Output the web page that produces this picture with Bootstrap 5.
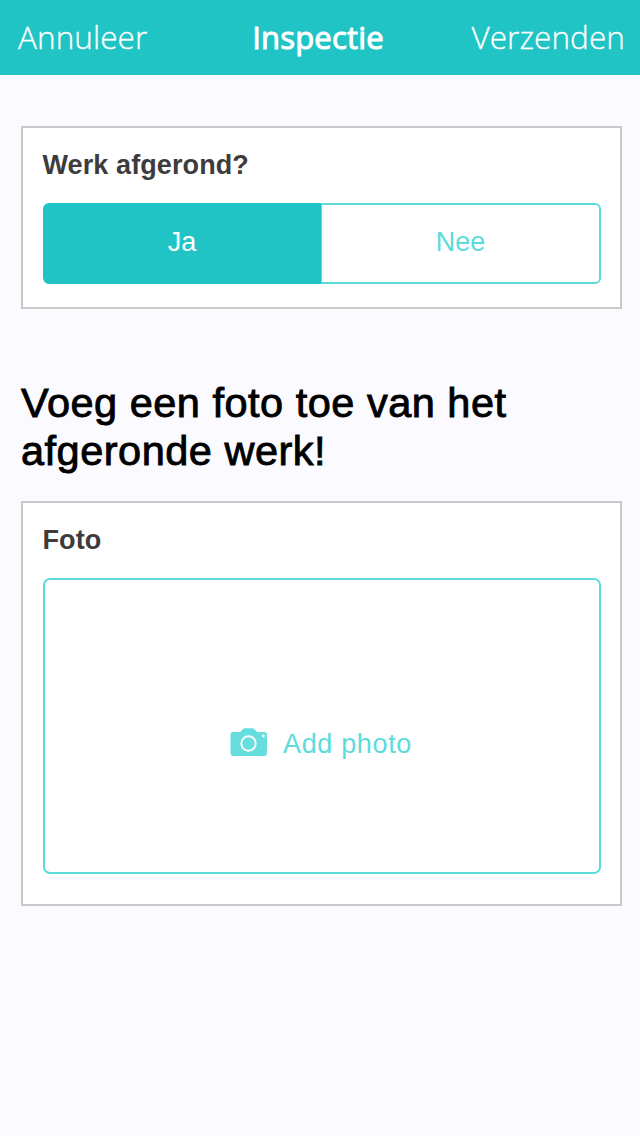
<!DOCTYPE html>
<html lang="nl">
<head>
<meta charset="utf-8">
<meta name="viewport" content="width=device-width, initial-scale=1">
<title>Inspectie</title>
<link href="https://cdn.jsdelivr.net/npm/bootstrap@5.3.0/dist/css/bootstrap.min.css" rel="stylesheet">
<style>
body{background:#fbfaff;font-family:"Liberation Sans",Arial,sans-serif;font-size:27px;min-height:1136px}
.topbar{height:75px;background:#20c4c4;font-family:"Open Sans",sans-serif;font-size:31.5px;line-height:73px;padding:0 15px 0 18px}
.topbar a{font-weight:300;flex:1 1 0;letter-spacing:.08px;-webkit-text-stroke:.3px #fff}
.topbar h1{font-size:31px;font-weight:400;line-height:75px;letter-spacing:.2px;padding-right:7px;-webkit-text-stroke:1px #fff}
.page-body{padding:51px 18px 0 21px}
.panel{border:2px solid #c9c9c9;border-radius:0;padding:18px 19px 0 20px}
.panel-title{font-size:27px;font-weight:700;line-height:38px;color:#3c3c3c;margin:0 0 19px -.5px;letter-spacing:.1px}
.answer{height:81px}
.answer .btn{font-size:27px;flex:1 1 0;border:2px solid #5bdcdc;border-radius:6px;color:#5bdcdc;background:#fff;padding:0 0 3px}
.answer .btn.active{flex:0 0 278px;background:#20c4c4;border-color:#20c4c4;color:#fff}
.answer .btn + .btn{margin-left:0!important;border-left-width:1px}
.prompt{font-size:41.5px;line-height:48px;color:#000;font-weight:400;margin:70px 0 26px;letter-spacing:.5px;-webkit-text-stroke:.9px #000}
.photo-drop{height:296px;border:2px solid #5bdcdc;border-radius:7px;color:#5bdcdc;background:#fff;font-size:27px;letter-spacing:.65px;padding:36px 2px 0 0;gap:15px}
.photo-drop svg{margin-bottom:4px}
</style>
</head>
<body>
<nav class="topbar d-flex text-white">
  <a class="text-white text-decoration-none text-start" href="#">Annuleer</a>
  <h1 class="m-0 text-center">Inspectie</h1>
  <a class="text-white text-decoration-none text-end" href="#">Verzenden</a>
</nav>
<main class="page-body">
  <section class="card panel" style="height:183px">
    <h2 class="panel-title">Werk afgerond?</h2>
    <div class="btn-group answer w-100">
      <button type="button" class="btn active">Ja</button>
      <button type="button" class="btn">Nee</button>
    </div>
  </section>
  <p class="prompt">Voeg een foto toe van het afgeronde werk!</p>
  <section class="card panel" style="height:405px">
    <h2 class="panel-title">Foto</h2>
    <button type="button" class="photo-drop w-100 d-flex align-items-center justify-content-center">
      <svg width="38" height="28" viewBox="0 0 38 28" aria-hidden="true">
        <path fill="#66dede" d="M3 4H9Q10.500 4 11.500 2.500Q13 .3 15 .3H22Q24 .3 25.500 2.500Q26.500 4 28 4H34.500Q37 4 37 6.500V25Q37 28 34 28H3.500Q.5 28 .5 25V6.500Q.5 4 3 4Z"/>
        <circle cx="18.500" cy="15.500" r="7.200" fill="none" stroke="#fff" stroke-width="1.900"/>
        <circle cx="33.300" cy="8" r="1.400" fill="#fff"/>
      </svg>
      <span>Add photo</span>
    </button>
  </section>
</main>
<script src="https://cdn.jsdelivr.net/npm/bootstrap@5.3.0/dist/js/bootstrap.bundle.min.js"></script>
</body>
</html>
